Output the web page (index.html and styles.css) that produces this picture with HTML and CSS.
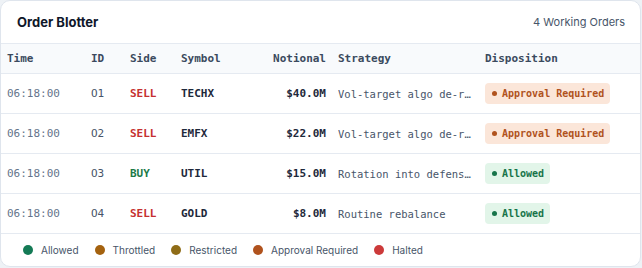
FILE: index.html
```html
<!DOCTYPE html>
<html>
<head>
<meta charset="utf-8">
<link rel="stylesheet" href="styles.css">
</head>
<body>
<div class="card">
  <div class="head">
    <div class="title">Order Blotter</div>
    <div class="count">4 Working Orders</div>
  </div>
  <table class="grid">
    <colgroup>
      <col class="c-time"><col class="c-id"><col class="c-side"><col class="c-sym"><col class="c-not"><col class="c-strat"><col class="c-disp">
    </colgroup>
    <thead>
      <tr><th>Time</th><th>ID</th><th>Side</th><th>Symbol</th><th class="num">Notional</th><th>Strategy</th><th>Disposition</th></tr>
    </thead>
    <tbody>
      <tr><td class="time">06:18:00</td><td class="id">O1</td><td class="sell">SELL</td><td class="sym">TECHX</td><td class="num not">$40.0M</td><td class="strat"><span>Vol-target algo de-risking</span></td><td><span class="badge appr"><i></i>Approval Required</span></td></tr>
      <tr><td class="time">06:18:00</td><td class="id">O2</td><td class="sell">SELL</td><td class="sym">EMFX</td><td class="num not">$22.0M</td><td class="strat"><span>Vol-target algo de-risking</span></td><td><span class="badge appr"><i></i>Approval Required</span></td></tr>
      <tr><td class="time">06:18:00</td><td class="id">O3</td><td class="buy">BUY</td><td class="sym">UTIL</td><td class="num not">$15.0M</td><td class="strat"><span>Rotation into defensives</span></td><td><span class="badge ok"><i></i>Allowed</span></td></tr>
      <tr><td class="time">06:18:00</td><td class="id">O4</td><td class="sell">SELL</td><td class="sym">GOLD</td><td class="num not">$8.0M</td><td class="strat"><span>Routine rebalance</span></td><td><span class="badge ok"><i></i>Allowed</span></td></tr>
    </tbody>
  </table>
  <div class="legend">
    <span class="lg"><i class="d-ok"></i>Allowed</span>
    <span class="lg"><i class="d-thr"></i>Throttled</span>
    <span class="lg"><i class="d-res"></i>Restricted</span>
    <span class="lg"><i class="d-appr"></i>Approval Required</span>
    <span class="lg"><i class="d-halt"></i>Halted</span>
  </div>
</div>
</body>
</html>
```
FILE: styles.css
```css
html, body { margin: 0; padding: 0; }
body {
  background: #eef2f6;
  font-family: Inter, "Noto Sans", sans-serif;
  width: 642px;
  height: 268px;
}
.card {
  width: 639px;
  height: 265px;
  background: #fff;
  border: 1px solid #dfe5ed;
  border-radius: 10px;
  overflow: hidden;
  display: flex;
  flex-direction: column;
}
.head {
  height: 42px;
  display: flex;
  align-items: center;
  justify-content: space-between;
  padding: 0 15px 0 16px;
  border-bottom: 1px solid #e5eaf1;
}
.title { font-size: 13px; font-weight: 700; color: #0f172a; }
.count { font-size: 11px; color: #475569; }
.grid {
  border-collapse: collapse;
  table-layout: fixed;
  width: 639px;
  font-family: "DejaVu Sans Mono", monospace;
  font-size: 11px;
}
.c-time { width: 84px; }
.c-id { width: 39px; }
.c-side { width: 51px; }
.c-sym { width: 75px; }
.c-not { width: 82px; }
.c-strat { width: 147px; }
.c-disp { width: 161px; }
th {
  background: #f8fafc;
  height: 29px;
  padding: 0 6px;
  text-align: left;
  font-weight: 700;
  color: #3b4a5e;
  border-bottom: 1px solid #e5eaf1;
}
td {
  height: 39px;
  padding: 0 6px;
  border-bottom: 1px solid #e5eaf1;
  white-space: nowrap;
  color: #334155;
}
.num { text-align: right; }
.time { color: #64748b; }
.id { color: #475569; }
.sell { color: #c53030; font-weight: 700; }
.buy { color: #1b7a48; font-weight: 700; }
.sym { color: #1e293b; font-weight: 700; }
.not { color: #1e293b; font-weight: 700; }
.strat span {
  display: block;
  overflow: hidden;
  text-overflow: ellipsis;
  font-size: 10.5px;
  color: #475569;
}
.badge {
  display: inline-flex;
  align-items: center;
  gap: 5px;
  height: 21px;
  padding: 0 6px 0 7px;
  border-radius: 4px;
  font-size: 10px;
  font-weight: 700;
}
.badge i { width: 5px; height: 5px; border-radius: 50%; background: currentColor; }
.appr { background: #fbe6d9; color: #b0521d; }
.ok { background: #e2f5e9; color: #17744a; }
.legend {
  flex: 1;
  display: flex;
  align-items: center;
  gap: 16px;
  padding: 0 0 0 22px;
  font-size: 10px;
  color: #475569;
}
.lg { display: inline-flex; align-items: center; gap: 8px; }
.lg i { width: 10px; height: 10px; border-radius: 50%; }
.d-ok { background: #147a55; }
.d-thr { background: #a4620f; }
.d-res { background: #8f6c17; }
.d-appr { background: #b0521d; }
.d-halt { background: #cc3a3a; }
```
